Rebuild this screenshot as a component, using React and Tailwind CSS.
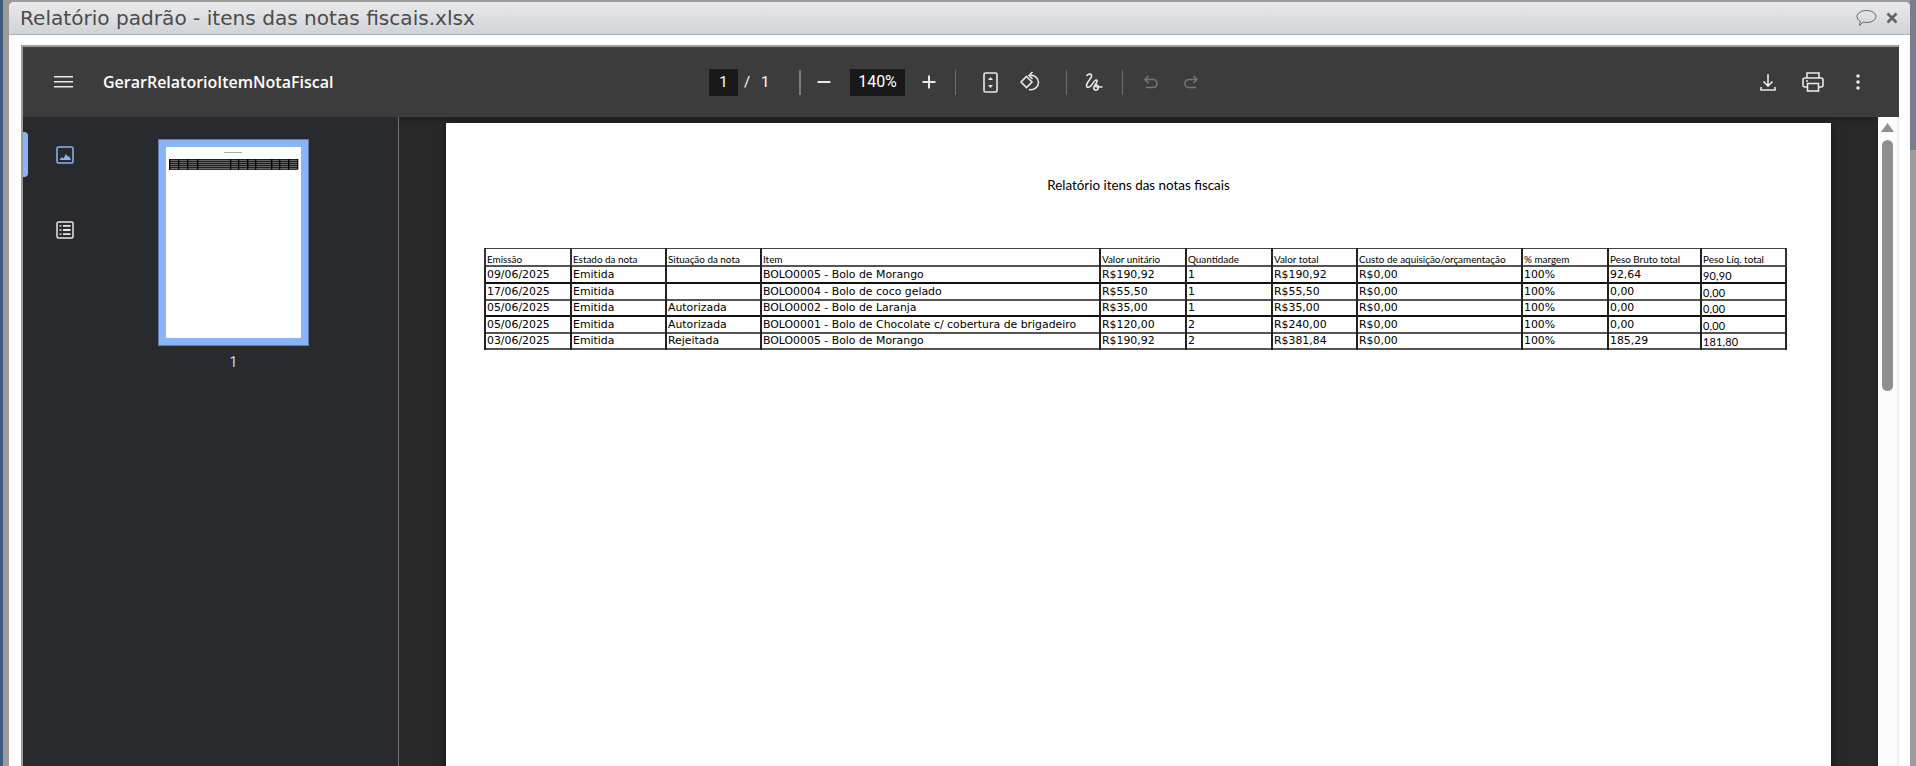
import React from "react";

const headers = ["Emissão", "Estado da nota", "Situação da nota", "Item", "Valor unitário", "Quantidade", "Valor total", "Custo de aquisição/orçamentação", "% margem", "Peso Bruto total", "Peso Líq. total"];

const rows = [
  ["09/06/2025", "Emitida", "", "BOLO0005 - Bolo de Morango", "R$190,92", "1", "R$190,92", "R$0,00", "100%", "92,64", "90,90"],
  ["17/06/2025", "Emitida", "", "BOLO0004 - Bolo de coco gelado", "R$55,50", "1", "R$55,50", "R$0,00", "100%", "0,00", "0,00"],
  ["05/06/2025", "Emitida", "Autorizada", "BOLO0002 - Bolo de Laranja", "R$35,00", "1", "R$35,00", "R$0,00", "100%", "0,00", "0,00"],
  ["05/06/2025", "Emitida", "Autorizada", "BOLO0001 - Bolo de Chocolate c/ cobertura de brigadeiro", "R$120,00", "2", "R$240,00", "R$0,00", "100%", "0,00", "0,00"],
  ["03/06/2025", "Emitida", "Rejeitada", "BOLO0005 - Bolo de Morango", "R$190,92", "2", "R$381,84", "R$0,00", "100%", "185,29", "181,80"],
];

const colWidths = [86, 95, 95, 339, 86, 86, 85, 165, 86, 93, 85];

// row lines in the picture alternate between heavy and light
const rowClasses = [
  "h-[17px] border-b-2 border-b-[#111]",
  "h-[17px] border-b-2 border-b-[#555]",
  "h-[16px] border-b-2 border-b-[#111]",
  "h-[17px] border-b-2 border-b-[#555]",
  "h-[16px] border-b-2 border-b-[#555]",
];

const Separator = ({ className = "" }) => <div className={`w-px h-[25px] bg-[#6f6f6f] ${className}`} />;

const Thumbnail = () => (
  <div className="w-[151px] h-[207px] border border-[#5f7cab] bg-[#8ab4f8] p-[7px]">
    <div className="w-full h-full bg-white">
      <svg width="135" height="190" viewBox="0 0 135 190">
        <rect x="58" y="5" width="18" height="1" fill="#aaa" />
        <rect x="3" y="12" width="128" height="10.500" fill="#666" />
        {[12, 14, 16, 18, 20, 22].map((y) => <rect key={y} x="3" y={y} width="128" height="0.700" fill="#000" />)}
        {[3, 12, 21, 31, 64, 72, 81, 89, 105, 113, 122, 131].map((x) => <rect key={x} x={x} y="12" width="1.300" height="10.500" fill="#000" />)}
      </svg>
    </div>
  </div>
);

export default function App() {
  return (
    <div className="w-[1916px] h-[766px] flex overflow-hidden bg-[#9b9b97]">
      {/* Page behind the dialog */}
      <div className="w-[3px] bg-[#3e5a7c]" />
      <div className="w-[6px] bg-[#9c9c9c]" />

      {/* Dialog */}
      <div className="w-[1901px] mt-[2px] flex flex-col bg-white rounded-t-[5px]">
        <div className="h-[33px] shrink-0 flex items-center pl-[11px] pr-[12px] rounded-t-[5px] border-b border-[#a9b4c0] bg-gradient-to-b from-[#e9eaec] to-[#d0d3d7]">
          <span className="text-[20.1px] leading-none text-[#4b4b4b] font-['DejaVu_Sans',sans-serif]">Relatório padrão - itens das notas fiscais.xlsx</span>
          <svg className="ml-auto" width="21" height="18" viewBox="0 0 21 18" fill="none" stroke="#5f666b" strokeWidth="1">
            <path d="M10.500 1.500c5 0 9.500 2.500 9.500 6s-4.500 6-9.500 6c-1.300 0-2.500-.2-3.500-.4L3.500 16.500l.8-4.300C2.300 11.200 1 9.500 1 7.500c0-3.500 4.500-6 9.500-6z" />
          </svg>
          <svg className="ml-[9px]" width="12" height="12" viewBox="0 0 12 12" stroke="#5d646a" strokeWidth="2.600">
            <path d="M1.500 1.500l9 9M10.500 1.500l-9 9" />
          </svg>
        </div>

        {/* PDF viewer */}
        <div className="flex-1 min-h-0 ml-[12px] mr-[11px] mt-[10px] border-l-2 border-t-2 border-[#9c9c9c] flex flex-col font-['Roboto',sans-serif]">
          {/* Toolbar */}
          <div className="h-[70px] shrink-0 flex items-center bg-[#3c3c3c] text-white">
            <svg className="ml-[31px]" width="20" height="14" viewBox="0 0 20 14" fill="#e8e8e8">
              <rect y="1" width="19" height="1.500" />
              <rect y="6" width="19" height="1.500" />
              <rect y="11" width="19" height="1.500" />
            </svg>
            <span className="ml-[29px] w-[231px] text-[16px] font-semibold whitespace-nowrap font-['Open_Sans',sans-serif]">GerarRelatorioItemNotaFiscal</span>

            <div className="ml-[375px] w-[29px] h-[27px] flex items-center justify-center bg-[#191919] text-[15px]">1</div>
            <span className="ml-[6px] w-[6px] text-[15px] text-center">/</span>
            <span className="ml-[11px] w-[6px] text-[15px] text-center">1</span>
            <Separator className="ml-[32px] !w-[2px] !bg-[#7a7a7a]" />
            <svg className="ml-[16px]" width="14" height="14" viewBox="0 0 14 14" fill="#e8e8e8"><rect x="0.500" y="6" width="13" height="2" /></svg>
            <div className="ml-[19px] w-[55px] h-[27px] flex items-center justify-center bg-[#191919] text-[16px]">140%</div>
            <svg className="ml-[17px]" width="14" height="14" viewBox="0 0 14 14" fill="#e8e8e8"><rect x="0.500" y="6" width="13" height="2" /><rect x="6" y="0.500" width="2" height="13" /></svg>
            <Separator className="ml-[19px]" />
            <svg className="ml-[27px]" width="15" height="21" viewBox="0 0 15 21" fill="none">
              <rect x="1" y="1" width="13" height="19" rx="1.500" stroke="#e8e8e8" strokeWidth="1.600" />
              <path d="M7.500 5l2.500 3H5zM7.500 16L5 13h5z" fill="#e8e8e8" />
            </svg>
            <svg className="ml-[21px]" width="22" height="22" viewBox="0 0 22 22" fill="none" stroke="#e8e8e8" strokeWidth="1.600">
              <path d="M7.500 8l5.500 5.500-5.500 5.500L2 13.500z" transform="translate(0 -2.500)" />
              <path d="M11 4.500c4.500-.8 8.500 2.500 8.500 7 0 4.300-4 8-9.500 7" />
              <path d="M13.500 1L10 4.500l3.500 3.500" />
            </svg>
            <Separator className="ml-[25px]" />
            <svg className="ml-[17px]" width="20" height="20" viewBox="0 0 20 20" fill="none" stroke="#e8e8e8" strokeWidth="1.600" strokeLinecap="round">
              <path d="M3 3.500C4.500 1.500 8 1.500 7.500 4.500 7 7 2.500 10 2.500 13.500c0 3 3.500 2 5.500-1 1.500-2.500 3-5 4.500-4.500 1.500.5-.5 3.500-2 6-1.500 2.500-.5 4.500 2 4 2.500-.5 2.500-5 0-5-1.500 0-1.500 2 .5 2H18" />
            </svg>
            <Separator className="ml-[18px]" />
            <svg className="ml-[20px]" width="16" height="16" viewBox="0 0 16 16" fill="none" stroke="#767676" strokeWidth="1.600">
              <path d="M5.500 2L2 5.500 5.500 9" /><path d="M2 5.500h8a4 4 0 010 8H3" />
            </svg>
            <svg className="ml-[24px]" width="16" height="16" viewBox="0 0 16 16" fill="none" stroke="#767676" strokeWidth="1.600">
              <path d="M10.500 2L14 5.500 10.500 9" /><path d="M14 5.500H6a4 4 0 000 8h7" />
            </svg>

            <svg className="ml-[561px]" width="16" height="17" viewBox="0 0 16 17" fill="none" stroke="#e8e8e8" strokeWidth="1.600">
              <path d="M8 0v12M3.500 7.500L8 12l4.500-4.500" /><path d="M1 13v3h14v-3" />
            </svg>
            <svg className="ml-[26px]" width="22" height="20" viewBox="0 0 22 20" fill="none" stroke="#e8e8e8" strokeWidth="1.600">
              <path d="M5 6V1h12v5" /><rect x="1" y="6" width="20" height="9" rx="2" /><rect x="5.500" y="11.500" width="11" height="7.500" fill="#3c3c3c" /><path d="M4 9h2" />
            </svg>
            <svg className="ml-[31px]" width="6" height="18" viewBox="0 0 6 18" fill="#e8e8e8">
              <circle cx="3" cy="3" r="1.800" /><circle cx="3" cy="9" r="1.800" /><circle cx="3" cy="15" r="1.800" />
            </svg>
          </div>

          <div className="flex-1 min-h-0 flex">
            {/* Sidebar */}
            <div className="w-[376px] shrink-0 flex bg-[#292a2d] border-r border-[#6e6e6e]">
              <div className="w-[75px] shrink-0 relative flex flex-col items-center pt-[29px] gap-[57px] pl-[8px]">
                <div className="absolute left-0 top-[15px] w-[5px] h-[45px] rounded-r bg-[#8ab4f8]" />
                <svg width="18" height="18" viewBox="0 0 18 18" fill="none">
                  <rect x="1" y="1" width="16" height="16" rx="1.500" stroke="#8ab4f8" strokeWidth="1.500" />
                  <path d="M3.500 14l2.500-3 1.500 1.500L10 8l2 3 1-1 2 4z" fill="#8ab4f8" />
                </svg>
                <svg width="18" height="18" viewBox="0 0 18 18" fill="none">
                  <rect x="1" y="1" width="16" height="16" rx="1.500" stroke="#e8e8e8" strokeWidth="1.500" />
                  <path d="M7 4.800h7.500M7 9h7.500M7 13.200h7.500" stroke="#e8e8e8" strokeWidth="1.800" />
                  <path d="M3.500 4.800h2M3.500 9h2M3.500 13.200h2" stroke="#e8e8e8" strokeWidth="1.300" />
                </svg>
              </div>
              <div className="pt-[22px] flex flex-col items-center w-[271px]">
                <Thumbnail />
                <span className="mt-[8px] text-[14px] leading-[17px] text-[#c6dafc]">1</span>
              </div>
            </div>

            {/* Document area */}
            <div className="flex-1 min-w-0 flex bg-[#282828]">
              <div className="flex-1 min-w-0 pl-[47px] pt-[6px] overflow-hidden bg-gradient-to-b from-[#1f1f1f] to-[#282828] to-[6px]">
                <div className="w-[1385px] h-[700px] bg-white shadow-[0_0_8px_rgba(0,0,0,0.55)]">
                  <p className="pt-[54px] text-center text-[13.4px] leading-[17px] text-black font-['Lato',sans-serif]">Relatório itens das notas fiscais</p>
                  <table className="ml-[38px] mt-[54px] border-collapse table-fixed w-[1302px] text-black">
                    <colgroup>
                      {colWidths.map((w, i) => <col key={i} span={1} width={w} />)}
                    </colgroup>
                    <thead>
                      <tr className="h-[17px] border-b-2 border-b-[#555]">
                        {headers.map((h, j) => (
                          <th key={h} className={`border-t border-t-[#444] border-x-2 ${j === 0 || j === 10 ? "border-x-[#333]" : "border-x-[#222]"} px-[1px] py-0 text-left align-bottom text-[9.9px] leading-[11px] font-normal whitespace-nowrap overflow-hidden font-['Lato',sans-serif]`}>{h}</th>
                        ))}
                      </tr>
                    </thead>
                    <tbody>
                      {rows.map((r, i) => (
                        <tr key={i} className={rowClasses[i]}>
                          {r.map((c, j) => (
                            <td key={j} className={`border-x-2 border-x-[#222] px-[1px] py-0 text-[10.9px] leading-[13px] whitespace-nowrap overflow-hidden ${j === 10 ? "align-bottom font-['Lato',sans-serif] tracking-[0.2px]" : j === 9 ? "font-['DejaVu_Sans',sans-serif] text-[10.5px]" : "font-['DejaVu_Sans',sans-serif]"}`}>{c}</td>
                          ))}
                        </tr>
                      ))}
                    </tbody>
                  </table>
                </div>
              </div>

              {/* Scrollbar */}
              <div className="w-[21px] shrink-0 flex flex-col items-center bg-[#fcfcfc] border-r-2 border-[#eeeeee]">
                <svg className="mt-[6px]" width="13" height="9" viewBox="0 0 13 9"><path d="M6.500 0L13 9H0z" fill="#8f8f8f" /></svg>
                <div className="mt-[8px] w-[11px] h-[251px] rounded-full bg-[#8f8f8f]" />
              </div>
            </div>
          </div>
        </div>
      </div>
      <div className="w-[6px] flex flex-col bg-[#9c9c9c]">
        <div className="h-[150px] bg-[#75808c]" />
      </div>
    </div>
  );
}
